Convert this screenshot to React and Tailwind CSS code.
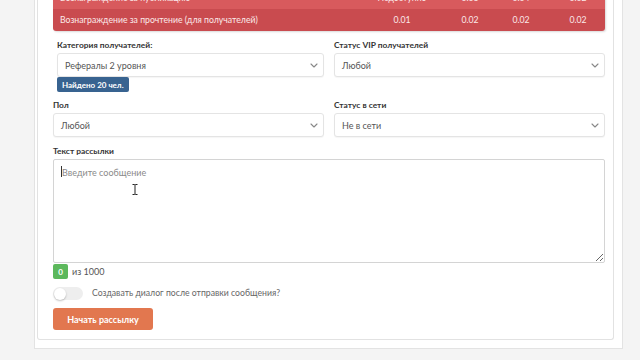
import React from "react";

const Chevron = () => (
  <svg width="8" height="5" viewBox="0 0 8 5" className="shrink-0">
    <path d="M1 1l3 3 3-3" fill="none" stroke="#888" strokeWidth="1.1" strokeLinecap="round" strokeLinejoin="round" />
  </svg>
);

const SelectBox = ({ value }) => (
  <div className="flex h-[24px] items-center justify-between rounded-[3px] border border-[#e4e4e4] bg-white pl-[7px] pr-[5px] text-[9px] text-[#555] shadow-[0_1px_1px_rgba(0,0,0,0.04)]">
    <span>{value}</span>
    <Chevron />
  </div>
);

const Label = ({ children }) => (
  <div className="mb-[2px] h-[11px] text-[8.4px] font-bold leading-[11px] text-[#333]">{children}</div>
);

const TableRow = ({ title, cells, bg }) => (
  <div className={`flex h-[22px] items-center text-[8.7px] leading-none text-[#fbe9e9] ${bg}`}>
    <div className="flex-1 pl-[7px]">{title}</div>
    <div className="w-[94px] text-center">{cells[0]}</div>
    <div className="w-[42px] text-center">{cells[1]}</div>
    <div className="w-[60px] text-center">{cells[2]}</div>
    <div className="w-[54px] text-center">{cells[3]}</div>
  </div>
);

export default function App() {
  return (
    <div className="h-[360px] w-[640px] overflow-hidden bg-[#f4f4f4] pl-[34px] leading-none [font-family:Lato,Roboto,sans-serif]">
      <div className="flow-root h-[349px] w-[589px] border-x border-b border-[#e3e3e3] bg-white pl-[2px]">
        <div className="flow-root h-[340px] w-[577px] rounded-b-[3px] border-x border-b border-[#e2e2e2] bg-white pl-[15px]">
          <div className="w-[552px]">
            <div className="-mt-[13px] overflow-hidden rounded-b-[3px] shadow-[1px_1px_2px_rgba(0,0,0,0.15)]">
              <TableRow title="Вознаграждение за публикацию" cells={["Недоступно", "0.03", "0.04", "0.02"]} bg="bg-[#d85a5d]" />
              <TableRow title="Вознаграждение за прочтение (для получателей)" cells={["0.01", "0.02", "0.02", "0.02"]} bg="bg-[#c94b4f]" />
            </div>

            <div className="mt-[9px] grid grid-cols-[271px_271px] items-start gap-x-[10px]">
              <div className="pl-[4px]">
                <Label>Категория получателей:</Label>
                <SelectBox value="Рефералы 2 уровня" />
                <div className="flex h-[15px] w-fit items-center rounded-[2px] bg-[#386390] px-[5px] text-[8px] font-bold text-white">
                  Найдено 20 чел.
                </div>
              </div>
              <div>
                <Label>Статус VIP получателей</Label>
                <SelectBox value="Любой" />
              </div>
            </div>

            <div className="mt-[8px] grid grid-cols-[271px_271px] items-start gap-x-[10px]">
              <div>
                <Label>Пол</Label>
                <SelectBox value="Любой" />
              </div>
              <div>
                <Label>Статус в сети</Label>
                <SelectBox value="Не в сети" />
              </div>
            </div>

            <div className="mt-[9px]">
              <Label>Текст рассылки</Label>
              <div className="relative">
                <textarea
                  readOnly
                  placeholder="Введите сообщение"
                  className="block h-[104px] w-full resize-y rounded-[2px] border border-[#d4d4d4] bg-white px-[8px] py-[7px] text-[9px] leading-[11px] text-[#555] outline-none placeholder:text-[#8a8a8a]"
                />
                <div className="absolute left-[8px] top-[7px] h-[11px] w-px bg-[#333]" />
                <svg width="6" height="11" viewBox="0 0 6 11" className="absolute left-[79px] top-[25px]">
                  <path d="M0.5 0.5h2l0.5 0.5 0.5-0.5h2M3 1v9M0.5 10.5h2l0.5-0.5 0.5 0.5h2" fill="none" stroke="#222" strokeWidth="1" />
                </svg>
              </div>
            </div>

            <div className="mt-px flex items-center gap-[4px]">
              <div className="flex h-[15px] w-[15px] items-center justify-center rounded-[2px] bg-[#5cb85c] text-[8px] font-bold text-white">
                0
              </div>
              <span className="text-[9px] text-[#555]">из 1000</span>
            </div>

            <div className="mt-[8px] flex items-center gap-[9px]">
              <div className="flex h-[13px] w-[30px] items-center rounded-full bg-[#eeeeee] pl-px">
                <div className="h-[12px] w-[12px] rounded-full bg-white shadow-[0_1px_2px_rgba(0,0,0,0.25)]" />
              </div>
              <span className="text-[8.7px] text-[#666]">Создавать диалог после отправки сообщения?</span>
            </div>

            <button className="mt-[8px] flex h-[22px] w-[100px] items-center justify-center rounded-[3px] bg-[#e2774f] text-[9px] font-bold text-white">
              Начать рассылку
            </button>
          </div>
        </div>
      </div>
    </div>
  );
}
